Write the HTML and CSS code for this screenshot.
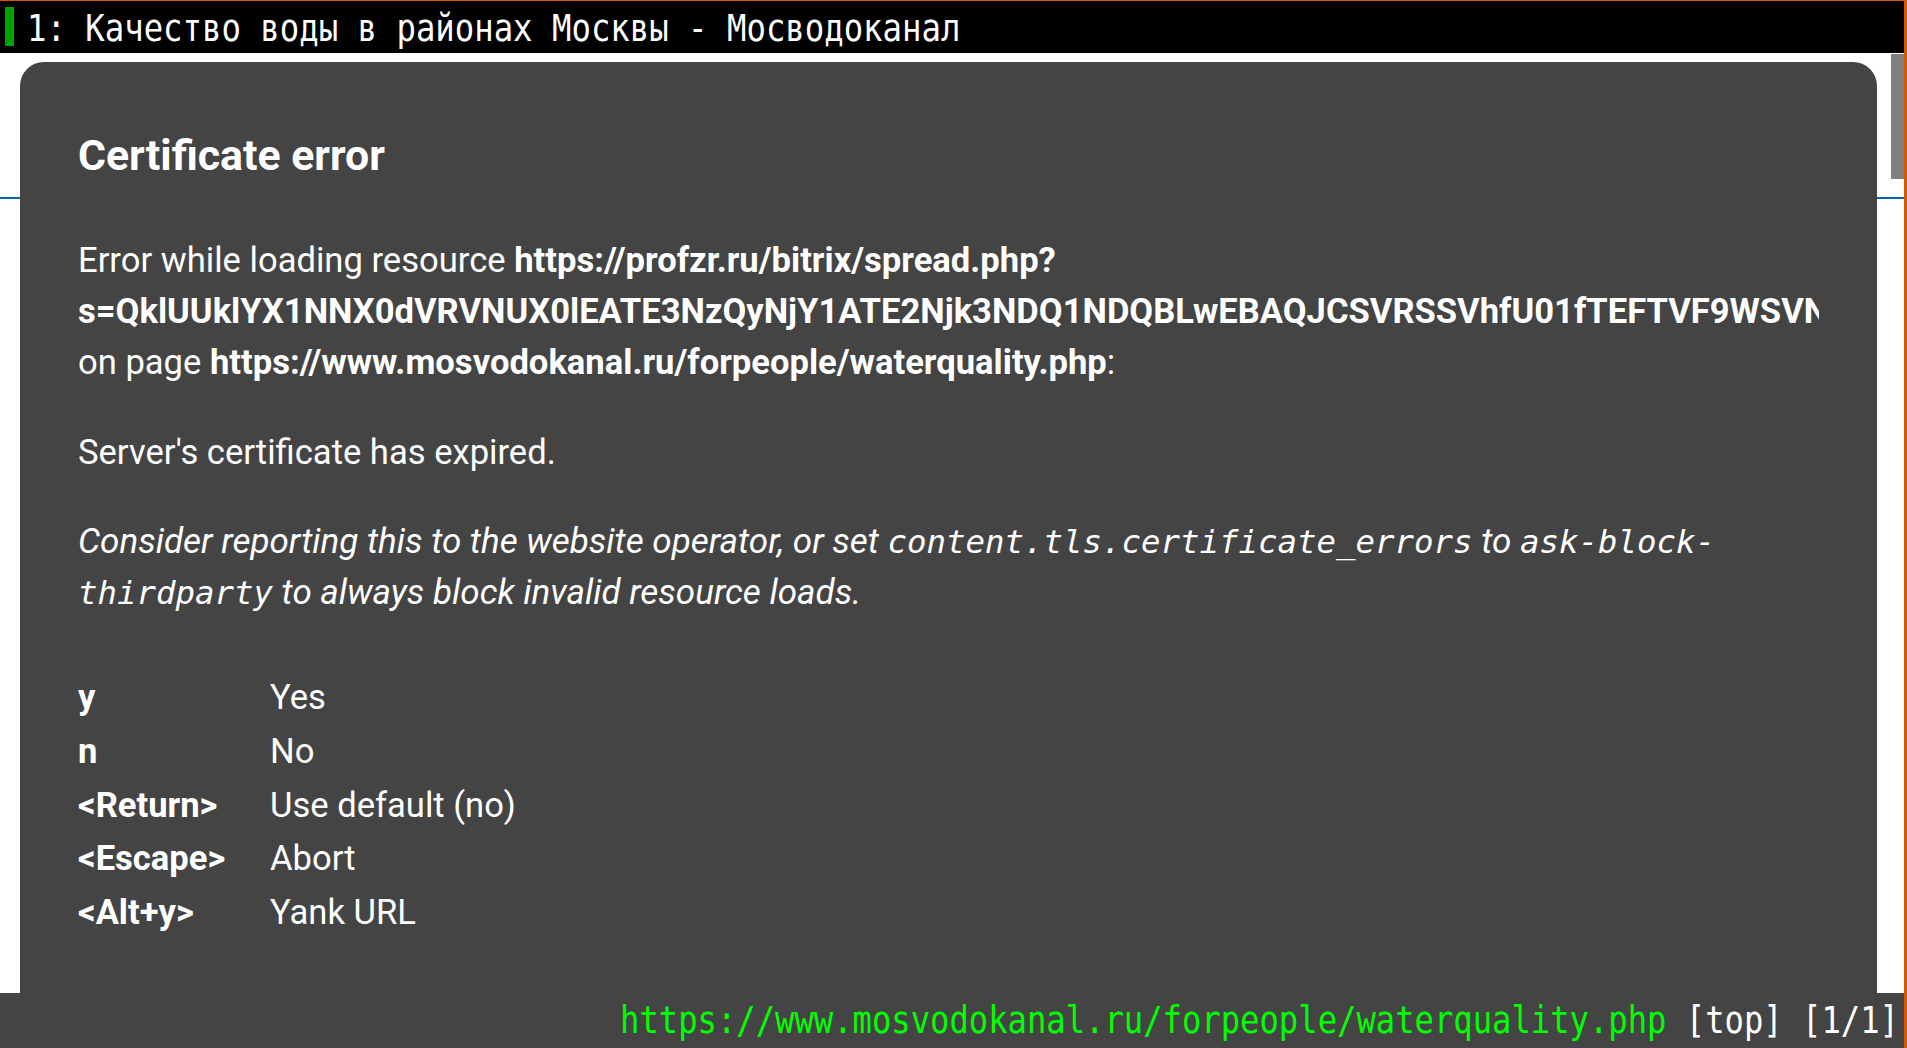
FILE: index.html
```
<!DOCTYPE html>
<html lang="en">
<head>
<meta charset="utf-8">
<title>Certificate error</title>
<link rel="stylesheet" href="styles.css">
</head>
<body>
<div class="window">
  <div class="tabbar">
    <span class="tab-indicator"></span>
    <span class="tab-title">1: Качество воды в районах Москвы - Мосводоканал</span>
  </div>
  <div class="viewport">
    <div class="page">
      <div class="page-rule"></div>
    </div>
    <div class="scrollbar"></div>
    <div class="prompt">
      <div class="prompt-inner">
        <h1 class="prompt-title">Certificate error</h1>
        <p class="prompt-text first">Error while loading resource <b>https://profzr.ru/bitrix/spread.php?</b><br><b class="nowrap">s=QklUUklYX1NNX0dVRVNUX0lEATE3NzQyNjY1ATE2Njk3NDQ1NDQBLwEBAQJCSVRSSVhfU01fTEFTVF9WSVNJVAEyMDIyLTExLTI4</b><br>on page <b>https://www.mosvodokanal.ru/forpeople/waterquality.php</b>:</p>
        <p class="prompt-text">Server's certificate has expired.</p>
        <p class="prompt-text hint">Consider reporting this to the website operator, or set <code class="code">content.tls.certificate_errors</code> to <code class="code">ask-block-thirdparty</code> to always block invalid resource loads.</p>
        <div class="keys">
          <span class="key">y</span><span class="action">Yes</span>
          <span class="key">n</span><span class="action">No</span>
          <span class="key">&lt;Return&gt;</span><span class="action">Use default (no)</span>
          <span class="key">&lt;Escape&gt;</span><span class="action">Abort</span>
          <span class="key">&lt;Alt+y&gt;</span><span class="action">Yank URL</span>
        </div>
      </div>
    </div>
  </div>
  <div class="statusbar">
    <span class="status-text"><span class="status-url">https://www.mosvodokanal.ru/forpeople/waterquality.php</span> [top] [1/1]</span>
  </div>
</div>
</body>
</html>
```
FILE: styles.css
```
html, body {
  margin: 0;
  padding: 0;
  background: #444444;
}

.window {
  width: 1907px;
  height: 1048px;
  box-sizing: border-box;
  border-top: 1px solid #d4580c;
  border-right: 3px solid #d4580c;
  display: flex;
  flex-direction: column;
  overflow: hidden;
  font-family: Roboto, "Noto Sans", sans-serif;
  color: #ffffff;
}

.tabbar {
  height: 52px;
  flex: none;
  background: #000000;
  display: flex;
  align-items: flex-start;
}

.tab-indicator {
  width: 9px;
  height: 39px;
  margin: 6px 13px 0 5px;
  background: #00a400;
  flex: none;
}

.tab-title {
  display: inline-block;
  font-family: "DejaVu Sans Mono", "Liberation Mono", monospace;
  font-size: 32.3px;
  line-height: 40px;
  margin-top: 4px;
  white-space: pre;
  color: #ffffff;
  transform: scaleY(1.15);
  transform-origin: left top;
}

.viewport {
  flex: 1;
  position: relative;
  background: #ffffff;
}

.page {
  padding-top: 144px;
}

.page-rule {
  height: 2px;
  background: #0062a8;
}

.scrollbar {
  position: absolute;
  right: 0;
  top: 1px;
  width: 13px;
  height: 125px;
  background: #808080;
}

.prompt {
  position: absolute;
  left: 20px;
  right: 27px;
  top: 9px;
  bottom: 0;
  background: #444444;
  border-radius: 24px 24px 0 0;
  padding: 67px 58px 0 58px;
}

.prompt-inner {
  overflow: hidden;
}

.prompt-title {
  margin: 0;
  font-size: 42.8px;
  font-weight: 700;
  line-height: 52px;
}

.prompt-text {
  margin: 39px 0 0 0;
  font-size: 34.6px;
  line-height: 51px;
}

.prompt-text.first {
  margin-top: 54px;
}

.prompt-text.hint {
  margin-top: 38px;
  font-size: 35px;
}

.prompt-text b {
  font-weight: 700;
}

.nowrap {
  white-space: nowrap;
}

.hint {
  font-style: italic;
}

.code {
  font-family: "DejaVu Sans Mono", "Liberation Mono", monospace;
  font-size: 32.4px;
  font-style: italic;
  line-height: 1;
}

.keys {
  margin-top: 53px;
  display: grid;
  grid-template-columns: 192px auto;
  grid-auto-rows: 53.75px;
  font-size: 34.6px;
  line-height: 53.75px;
}

.key {
  font-weight: 700;
}

.statusbar {
  height: 55px;
  flex: none;
  background: #444444;
  display: flex;
  justify-content: flex-end;
  align-items: flex-start;
  padding-right: 5px;
}

.status-text {
  display: inline-block;
  font-family: "DejaVu Sans Mono", "Liberation Mono", monospace;
  font-size: 32.2px;
  line-height: 40px;
  margin-top: 4px;
  white-space: pre;
  color: #ffffff;
  transform: scaleY(1.15);
  transform-origin: right top;
}

.status-url {
  color: #00ff00;
}
```
